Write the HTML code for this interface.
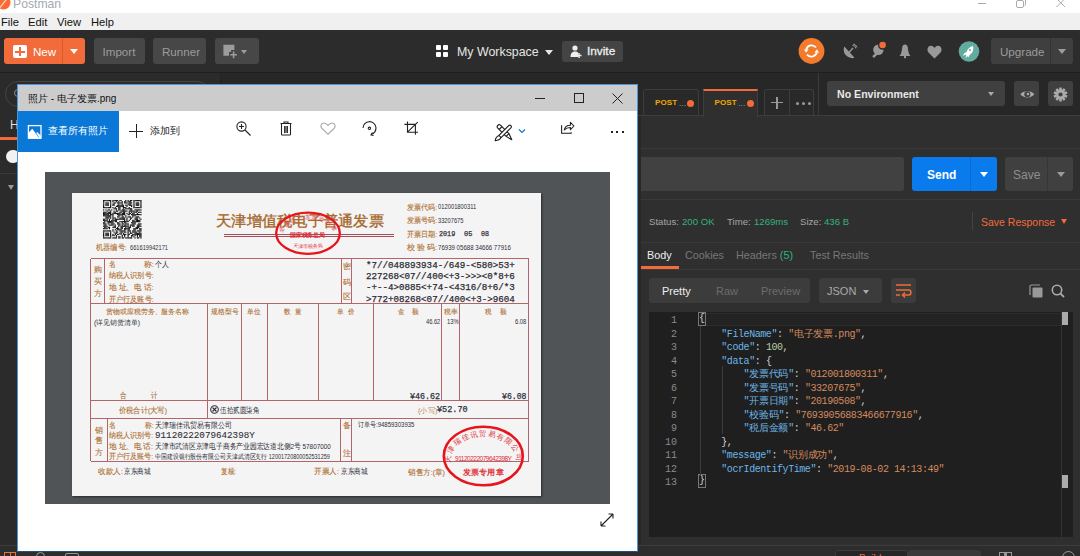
<!DOCTYPE html>
<html><head><meta charset="utf-8">
<style>
*{margin:0;padding:0;box-sizing:border-box}
html,body{width:1080px;height:556px;overflow:hidden;background:#2f2f2f;font-family:"Liberation Sans",sans-serif}
.a{position:absolute}
.t{position:absolute;white-space:nowrap;line-height:1}
/* postman */
#titlebar{left:0;top:0;width:1080px;height:13px;background:#fff}
#menubar{left:0;top:13px;width:1080px;height:17px;background:#f0f0f0}
#header{left:0;top:30px;width:1080px;height:42px;background:#2c2c2c}
.btn{position:absolute;background:#474747;border-radius:3px;color:#9c9c9c;font-size:12px;text-align:center}
.mono{font-family:"Liberation Mono",monospace}
.ln{position:absolute;left:650px;width:27px;text-align:right;height:13.5px;line-height:13.5px;font-family:"Liberation Mono",monospace;font-size:10px;color:#8a8a8a}
.cl{position:absolute;left:699px;height:13.5px;line-height:13.5px;font-family:"Liberation Mono",monospace;font-size:10px;letter-spacing:-0.43px;color:#cfcfcf;white-space:pre}
.br{outline:1px solid #777;outline-offset:0px;display:inline-block;height:12px;line-height:11px;vertical-align:top;margin-top:-1px}
</style></head><body>
<!-- window title bar -->
<div class="a" id="titlebar"></div>
<svg class="a" style="left:-4px;top:-5px" width="15" height="15"><circle cx="7.5" cy="7.5" r="7" fill="#fb6a33"/><path d="M4 12.5L11.5 3" stroke="#ffd2bd" stroke-width="1.3"/></svg>
<div class="t" style="left:13px;top:-2.5px;font-size:12.2px;color:#a3a9b0">Postman</div>
<div class="a" style="left:977.5px;top:2.6px;width:8.5px;height:1px;background:#aaa"></div>
<svg class="a" style="left:1015px;top:-3px" width="12" height="12"><rect x="1.5" y="3.5" width="7" height="7" rx="1.5" fill="none" stroke="#aaa" stroke-width="1"/><path d="M3.5 2.5Q3.5 1.5 4.5 1.5H9Q10.5 1.5 10.5 3V7.5Q10.5 8.5 9.5 8.5" fill="none" stroke="#aaa" stroke-width="1"/></svg>
<svg class="a" style="left:1056px;top:-2px" width="10" height="10"><path d="M0.5 0.5L9 9M9 0.5L0.5 9" stroke="#aaa" stroke-width="1"/></svg>
<!-- menu -->
<div class="a" id="menubar"></div>
<div class="t" style="left:1px;top:17px;font-size:11.2px;color:#111">File</div>
<div class="t" style="left:28px;top:17px;font-size:11.2px;color:#111">Edit</div>
<div class="t" style="left:57px;top:17px;font-size:11.2px;color:#111">View</div>
<div class="t" style="left:91px;top:17px;font-size:11.2px;color:#111">Help</div>
<!-- header -->
<div class="a" id="header"></div>
<div class="a" style="left:0;top:72px;width:1080px;height:1px;background:#1f1f1f"></div>
<!-- New button -->
<div class="a" style="left:4px;top:38px;width:81px;height:26px;background:#f26b3a;border-radius:3px"></div>
<div class="a" style="left:62px;top:38px;width:1px;height:26px;background:#d95a2b"></div>
<div class="a" style="left:13px;top:45px;width:14px;height:13px;background:#fff;border-radius:2px"></div>
<div class="a" style="left:19px;top:47px;width:2px;height:9px;background:#f26b3a"></div>
<div class="a" style="left:15px;top:50.5px;width:10px;height:2px;background:#f26b3a"></div>
<div class="t" style="left:33px;top:46px;font-size:11.6px;color:#fff">New</div>
<div class="a" style="left:70px;top:49px;width:0;height:0;border-left:4px solid transparent;border-right:4px solid transparent;border-top:5px solid #fff"></div>
<div class="btn" style="left:94px;top:38px;width:51px;height:26px"></div>
<div class="t" style="left:102.5px;top:46px;font-size:11.6px;color:#9c9c9c">Import</div>
<div class="btn" style="left:153px;top:38px;width:53px;height:26px"></div>
<div class="t" style="left:162px;top:46px;font-size:11.6px;color:#9c9c9c">Runner</div>
<div class="btn" style="left:215px;top:38px;width:44px;height:26px"></div>
<svg class="a" style="left:223px;top:44px" width="16" height="17" viewBox="0 0 16 17"><path d="M0.4 0.8H11.4V5.9H8.1V8H6V11.8H0.4Z" fill="#9c9c9c"/><path d="M7.3 10.8H14M10.6 7.5V14.2" stroke="#9c9c9c" stroke-width="1.6"/></svg>
<div class="a" style="left:240.5px;top:49.5px;width:0;height:0;border-left:3.3px solid transparent;border-right:3.3px solid transparent;border-top:4.3px solid #9c9c9c"></div>
<!-- workspace -->
<div class="a" style="left:436px;top:45px;width:5px;height:5px;background:#fff;border-radius:1px"></div>
<div class="a" style="left:443px;top:45px;width:5px;height:5px;background:#fff;border-radius:1px"></div>
<div class="a" style="left:436px;top:52px;width:5px;height:5px;background:#fff;border-radius:1px"></div>
<div class="a" style="left:443px;top:52px;width:5px;height:5px;background:#fff;border-radius:1px"></div>
<div class="t" style="left:457px;top:45.5px;font-size:12.4px;color:#e6e6e6">My Workspace</div>
<div class="a" style="left:545px;top:50px;width:0;height:0;border-left:4px solid transparent;border-right:4px solid transparent;border-top:5px solid #e6e6e6"></div>
<div class="btn" style="left:562px;top:41px;width:61px;height:21px;background:#444"></div>
<svg class="a" style="left:570px;top:45px" width="12" height="13" viewBox="0 0 12 13"><circle cx="5" cy="3" r="2.6" fill="#eee"/><path d="M0.5 12C0.5 8 2.5 6.5 5 6.5C6.5 6.5 7.5 7 8 7.5V12Z" fill="#eee"/><path d="M9 8V13M6.5 10.5H11.5" stroke="#eee" stroke-width="1.5"/></svg>
<div class="t" style="left:587px;top:46px;font-size:11.8px;color:#f0f0f0;-webkit-text-stroke:0.3px #f0f0f0">Invite</div>
<!-- right header icons -->
<svg class="a" style="left:798px;top:38px" width="27" height="27" viewBox="0 0 27 27"><circle cx="13.5" cy="13" r="12.9" fill="#f47a2c"/>
<g fill="none" stroke="#fff" stroke-width="1.8"><path d="M8.2 11.5A5.6 5.6 0 0 1 18 9.5"/><path d="M18.8 14.5A5.6 5.6 0 0 1 9 16.5"/></g>
<path d="M6 11.2L10.6 11.6L8 14.8Z" fill="#fff"/><path d="M21 14.8L16.4 14.4L19 11.2Z" fill="#fff"/></svg>
<svg class="a" style="left:842px;top:43px" width="16" height="16" viewBox="0 0 16 16"><path d="M2.3 3.5A8.5 8.5 0 0 0 12.5 14.8Z" fill="#999"/><path d="M7 9.5L11 5" stroke="#999" stroke-width="1.3"/><path d="M10.5 2.5A3 3 0 0 1 13.8 5.5M11 1A4.5 4.5 0 0 1 15 4.5" stroke="#999" stroke-width="1" fill="none"/></svg>
<svg class="a" style="left:871px;top:40px" width="17" height="19" viewBox="0 0 17 19"><circle cx="7.4" cy="9.8" r="5.2" fill="#999"/><path d="M5.5 12L1.2 16.3L3 18L7.3 13.7Z" fill="#999"/><circle cx="11.6" cy="5.2" r="4.6" fill="#2c2c2c"/><circle cx="7.4" cy="9.8" r="1.6" fill="#999"/><circle cx="11.6" cy="5" r="3.3" fill="#f26b3a"/></svg>
<svg class="a" style="left:899px;top:44px" width="12" height="15" viewBox="0 0 12 15"><path d="M6 0.5C4.5 0.5 3.5 1.5 3.3 3C2.8 6.5 2.6 10 0.5 12H11.5C9.4 10 9.2 6.5 8.7 3C8.5 1.5 7.5 0.5 6 0.5Z" fill="#999"/><rect x="5" y="12" width="2" height="2.2" fill="#999"/></svg>
<svg class="a" style="left:927px;top:45px" width="15" height="14" viewBox="0 0 15 14"><path d="M7.5 13.5L1.5 7.5C-0.5 5.5 0.5 0.8 4 0.8C5.8 0.8 6.8 2 7.5 3C8.2 2 9.2 0.8 11 0.8C14.5 0.8 15.5 5.5 13.5 7.5Z" fill="#999"/></svg>
<svg class="a" style="left:958px;top:41px" width="22" height="22" viewBox="0 0 22 22"><circle cx="11" cy="10.5" r="10.3" fill="#62ab9f"/><path d="M15 5C12 5.5 9.5 8 8.5 11L6 12.5L5 15L7.5 13.5L8.3 14.5L7.5 17L10 15L10.5 16.5L12 13.5C14 12.5 16 9.5 15 5Z" fill="#fff"/><circle cx="12" cy="9" r="1" fill="#62ab9f"/></svg>

<div class="btn" style="left:991px;top:38px;width:82px;height:26px;background:#3f3f3f"></div>
<div class="a" style="left:1050px;top:38px;width:1px;height:26px;background:#333"></div>
<div class="t" style="left:1000px;top:46px;font-size:11.6px;color:#9c9c9c">Upgrade</div>
<div class="a" style="left:1058px;top:49px;width:0;height:0;border-left:4px solid transparent;border-right:4px solid transparent;border-top:5px solid #9c9c9c"></div>

<!-- sidebar -->
<div class="a" style="left:0;top:73px;width:220px;height:472px;background:#2b2b2b"></div>
<div class="a" style="left:220px;top:73px;width:1px;height:472px;background:#222"></div>
<div class="a" style="left:5px;top:81px;width:205px;height:26px;border:1px solid #444;border-radius:13px"></div>

<!-- main right -->
<div class="a" style="left:221px;top:73px;width:859px;height:472px;background:#2f2f2f"></div>

<!-- sidebar bits (left of photo window) -->
<div class="t" style="left:10px;top:119px;font-size:12px;color:#ddd">H</div>
<div class="a" style="left:0;top:137px;width:30px;height:3px;background:#f26b3a"></div>
<div class="a" style="left:6px;top:150px;width:14px;height:13px;border-radius:7px;background:#f2f2f2"></div>
<div class="a" style="left:0;top:173px;width:220px;height:1px;background:#3a3a3a"></div>
<div class="a" style="left:8px;top:185px;width:0;height:0;border-left:3.5px solid transparent;border-right:3.5px solid transparent;border-top:5px solid #999"></div>
<div class="a" style="left:14px;top:88.5px;width:8.5px;height:8.5px;border-radius:50%;border:1.3px solid #8a8a8a"></div>

<!-- tabs row -->
<div class="a" style="left:221px;top:73px;width:859px;height:42px;background:#272727"></div>
<div class="a" style="left:818px;top:73px;width:1px;height:42px;background:#3a3a3a"></div>
<div class="a" style="left:221px;top:115px;width:859px;height:1px;background:#3d3d3d"></div>
<div class="a" style="left:643px;top:89px;width:56px;height:26px;border:1px solid #3d3d3d;border-bottom:none;border-radius:3px 3px 0 0;background:#292929"></div>
<div class="t" style="left:655px;top:99px;font-size:8px;font-weight:bold;color:#f0a800;letter-spacing:0.1px">POST</div>
<div class="t" style="left:679px;top:100px;font-size:8px;color:#bbb;letter-spacing:0.3px">...</div>
<div class="a" style="left:687px;top:99.5px;width:7px;height:7px;border-radius:50%;background:#f26b3a"></div>
<div class="a" style="left:703px;top:89px;width:55px;height:28px;border:1px solid #3d3d3d;border-top:2px solid #f26b3a;border-bottom:none;background:#2f2f2f"></div>
<div class="t" style="left:714.5px;top:99px;font-size:8px;font-weight:bold;color:#f0a800;letter-spacing:0.1px">POST</div>
<div class="t" style="left:738px;top:100px;font-size:8px;color:#bbb;letter-spacing:0.3px">...</div>
<div class="a" style="left:746.5px;top:99.5px;width:7px;height:7px;border-radius:50%;background:#f26b3a"></div>
<div class="a" style="left:764px;top:89px;width:50px;height:26px;border:1px solid #3d3d3d;border-bottom:none;border-radius:3px 3px 0 0;background:#292929"></div>
<div class="a" style="left:789px;top:90px;width:1px;height:25px;background:#3d3d3d"></div>
<div class="a" style="left:771px;top:102px;width:12px;height:1.3px;background:#999"></div>
<div class="a" style="left:776.4px;top:96.5px;width:1.3px;height:12px;background:#999"></div>
<div class="a" style="left:795.5px;top:101.5px;width:3.4px;height:3.4px;border-radius:50%;background:#999"></div>
<div class="a" style="left:801.5px;top:101.5px;width:3.4px;height:3.4px;border-radius:50%;background:#999"></div>
<div class="a" style="left:807.5px;top:101.5px;width:3.4px;height:3.4px;border-radius:50%;background:#999"></div>
<!-- env -->
<div class="a" style="left:827px;top:81px;width:178px;height:25px;background:#404040;border-radius:3px"></div>
<div class="t" style="left:837px;top:89px;font-size:10.6px;font-weight:bold;color:#e8e8e8">No Environment</div>
<div class="a" style="left:988px;top:92px;width:0;height:0;border-left:3.5px solid transparent;border-right:3.5px solid transparent;border-top:4px solid #aaa"></div>
<div class="a" style="left:1014px;top:81px;width:25px;height:25px;background:#404040;border-radius:3px"></div>
<div class="a" style="left:1048px;top:81px;width:25px;height:25px;background:#404040;border-radius:3px"></div>
<svg class="a" style="left:1019.5px;top:89.5px" width="15" height="9"><path d="M0.3 4.3C3 0.2 11.8 0.2 14.3 4.3C11.8 8.4 3 8.4 0.3 4.3Z" fill="#aaa"/><circle cx="7.3" cy="4.3" r="3" fill="#404040"/><circle cx="7.9" cy="4" r="1.3" fill="#aaa"/></svg><svg class="a" style="left:1053px;top:86.5px" width="15" height="15"><g fill="#aaa"><circle cx="7.5" cy="7.5" r="4.9"/><rect x="6.2" y="0.6" width="2.6" height="13.8" rx="0.3" transform="rotate(0 7.5 7.5)"/><rect x="6.2" y="0.6" width="2.6" height="13.8" rx="0.3" transform="rotate(36 7.5 7.5)"/><rect x="6.2" y="0.6" width="2.6" height="13.8" rx="0.3" transform="rotate(72 7.5 7.5)"/><rect x="6.2" y="0.6" width="2.6" height="13.8" rx="0.3" transform="rotate(108 7.5 7.5)"/><rect x="6.2" y="0.6" width="2.6" height="13.8" rx="0.3" transform="rotate(144 7.5 7.5)"/></g><circle cx="7.5" cy="7.5" r="2.1" fill="#404040"/></svg>

<!-- url row -->
<div class="a" style="left:221px;top:148px;width:859px;height:1px;background:#3a3a3a"></div>
<div class="a" style="left:221px;top:157px;width:683px;height:34px;background:#414141;border-radius:3px"></div>
<div class="a" style="left:912px;top:157px;width:85px;height:34px;background:#097bed;border-radius:3px"></div>
<div class="a" style="left:970px;top:157px;width:1px;height:34px;background:#0a6ad0"></div>
<div class="t" style="left:927px;top:168.5px;font-size:12px;font-weight:bold;color:#fff">Send</div>
<div class="a" style="left:980px;top:172px;width:0;height:0;border-left:4px solid transparent;border-right:4px solid transparent;border-top:5px solid #fff"></div>
<div class="a" style="left:1005px;top:157px;width:68px;height:34px;background:#404040;border-radius:3px"></div>
<div class="a" style="left:1047px;top:157px;width:1px;height:34px;background:#363636"></div>
<div class="t" style="left:1013px;top:168.5px;font-size:12px;color:#8f8f8f">Save</div>
<div class="a" style="left:1057px;top:172px;width:0;height:0;border-left:4px solid transparent;border-right:4px solid transparent;border-top:5px solid #9a9a9a"></div>

<!-- status row -->
<div class="a" style="left:221px;top:199px;width:859px;height:1px;background:#383838"></div>
<div class="t" style="left:649px;top:216.5px;font-size:9.6px;color:#a6a6a6">Status:</div>
<div class="t" style="left:682px;top:216.5px;font-size:9.6px;color:#32b37b">200 OK</div>
<div class="t" style="left:727px;top:216.5px;font-size:9.6px;color:#a6a6a6">Time:</div>
<div class="t" style="left:754px;top:216.5px;font-size:9.6px;color:#32b37b">1269ms</div>
<div class="t" style="left:800px;top:216.5px;font-size:9.6px;color:#a6a6a6">Size:</div>
<div class="t" style="left:824px;top:216.5px;font-size:9.6px;color:#32b37b">436 B</div>
<div class="a" style="left:972px;top:212px;width:1px;height:18px;background:#444"></div>
<div class="t" style="left:981px;top:216.5px;font-size:10.5px;color:#f26b3a">Save Response</div>
<div class="a" style="left:1061px;top:219px;width:0;height:0;border-left:3.5px solid transparent;border-right:3.5px solid transparent;border-top:5px solid #f26b3a"></div>
<div class="a" style="left:221px;top:242px;width:859px;height:1px;background:#383838"></div>
<!-- body tabs -->
<div class="t" style="left:647px;top:250px;font-size:10.8px;color:#eee">Body</div>
<div class="t" style="left:685px;top:250px;font-size:10.8px;color:#777">Cookies</div>
<div class="t" style="left:736px;top:250px;font-size:10.8px;color:#777">Headers <span style="color:#32b37b">(5)</span></div>
<div class="t" style="left:810px;top:250px;font-size:10.8px;color:#777">Test Results</div>
<div class="a" style="left:640px;top:266px;width:39px;height:3px;background:#f26b3a"></div>
<div class="a" style="left:221px;top:269px;width:859px;height:1px;background:#3a3a3a"></div>
<!-- pretty bar -->
<div class="a" style="left:649px;top:278px;width:161px;height:25px;background:#3c3c3c;border-radius:3px"></div>
<div class="t" style="left:662px;top:286px;font-size:11px;color:#eee">Pretty</div>
<div class="t" style="left:716px;top:286px;font-size:11px;color:#6c6c6c">Raw</div>
<div class="t" style="left:761px;top:286px;font-size:11px;color:#6c6c6c">Preview</div>
<div class="a" style="left:819px;top:278px;width:63px;height:25px;background:#3c3c3c;border-radius:3px"></div>
<div class="t" style="left:827px;top:286px;font-size:11px;color:#aaa">JSON</div>
<div class="a" style="left:863px;top:290px;width:0;height:0;border-left:3.5px solid transparent;border-right:3.5px solid transparent;border-top:4px solid #aaa"></div>
<div class="a" style="left:891px;top:278px;width:25px;height:25px;background:#3c3c3c;border-radius:3px"></div>
<svg class="a" style="left:895px;top:283px" width="17" height="15" viewBox="0 0 17 15"><g fill="none" stroke="#f26b3a" stroke-width="1.5"><path d="M1 2H16M1 7H14C16.5 7 16.5 12 14 12H8"/><path d="M1 12H5"/><path d="M10 9.5L7.5 12L10 14.5"/></g></svg>
<svg class="a" style="left:1029px;top:284px" width="14" height="14" viewBox="0 0 14 14"><path d="M1 11V2.5Q1 1 2.5 1H11" fill="none" stroke="#999" stroke-width="1.2"/><rect x="3.5" y="3.5" width="10" height="10" rx="1" fill="#999"/></svg>
<svg class="a" style="left:1051px;top:284px" width="14" height="14" viewBox="0 0 14 14"><circle cx="6" cy="6" r="4.7" fill="none" stroke="#aaa" stroke-width="1.6"/><path d="M9.3 9.3L13 13" stroke="#aaa" stroke-width="1.8"/></svg>

<!-- code editor -->
<div class="a" style="left:649px;top:312px;width:424px;height:225px;background:#1f1f1f"></div>
<div class="a" style="left:700px;top:313px;width:361px;height:13px;background:#232323;border-top:1px solid #2c2c2c;border-bottom:1px solid #2c2c2c"></div>
<div class="a" style="left:1061px;top:312px;width:1px;height:225px;background:#333"></div>
<div class="a" style="left:1062px;top:312px;width:6px;height:13px;background:#aaa"></div>
<div class="a" style="left:1062px;top:475px;width:6px;height:13px;background:#aaa"></div>

<div class="a" style="left:638px;top:116px;width:3px;height:429px;background:#282828"></div>
<!-- code lines -->
<div class="ln" style="top:314.0px">1</div>
<div class="cl" style="top:314.0px"><span class="br">{</span></div>
<div class="ln" style="top:327.5px">2</div>
<div class="cl" style="top:327.5px">    <span style="color:#6cb6e6">"FileName"</span>: <span style="color:#d58a5e">"<span style="letter-spacing:-0.25px">电子发票</span>.png"</span>,</div>
<div class="ln" style="top:341.0px">3</div>
<div class="cl" style="top:341.0px">    <span style="color:#6cb6e6">"code"</span>: <span style="color:#b5cea8">100</span>,</div>
<div class="ln" style="top:354.5px">4</div>
<div class="cl" style="top:354.5px">    <span style="color:#6cb6e6">"data"</span>: {</div>
<div class="ln" style="top:368.0px">5</div>
<div class="cl" style="top:368.0px">        <span style="color:#6cb6e6">"<span style="letter-spacing:-0.25px">发票代码</span>"</span>: <span style="color:#d58a5e">"012001800311"</span>,</div>
<div class="ln" style="top:381.5px">6</div>
<div class="cl" style="top:381.5px">        <span style="color:#6cb6e6">"<span style="letter-spacing:-0.25px">发票号码</span>"</span>: <span style="color:#d58a5e">"33207675"</span>,</div>
<div class="ln" style="top:395.0px">7</div>
<div class="cl" style="top:395.0px">        <span style="color:#6cb6e6">"<span style="letter-spacing:-0.25px">开票日期</span>"</span>: <span style="color:#d58a5e">"20190508"</span>,</div>
<div class="ln" style="top:408.5px">8</div>
<div class="cl" style="top:408.5px">        <span style="color:#6cb6e6">"<span style="letter-spacing:-0.25px">校验码</span>"</span>: <span style="color:#d58a5e">"76939056883466677916"</span>,</div>
<div class="ln" style="top:422.0px">9</div>
<div class="cl" style="top:422.0px">        <span style="color:#6cb6e6">"<span style="letter-spacing:-0.25px">税后金额</span>"</span>: <span style="color:#d58a5e">"46.62"</span></div>
<div class="ln" style="top:435.5px">10</div>
<div class="cl" style="top:435.5px">    },</div>
<div class="ln" style="top:449.0px">11</div>
<div class="cl" style="top:449.0px">    <span style="color:#6cb6e6">"message"</span>: <span style="color:#d58a5e">"<span style="letter-spacing:-0.25px">识别成功</span>"</span>,</div>
<div class="ln" style="top:462.5px">12</div>
<div class="cl" style="top:462.5px">    <span style="color:#6cb6e6">"ocrIdentifyTime"</span>: <span style="color:#d58a5e">"2019-08-02 14:13:49"</span></div>
<div class="ln" style="top:476.0px">13</div>
<div class="cl" style="top:476.0px"><span class="br">}</span></div>
<div class="a" style="left:700px;top:326px;width:1px;height:150px;background:#3c3c3c"></div>
<div class="a" style="left:722px;top:366px;width:1px;height:68px;background:#3c3c3c"></div>
<!-- status bar -->
<div class="a" style="left:0;top:545px;width:1080px;height:11px;background:#2d2d2d;border-top:1px solid #3c3c3c"></div>
<div class="a" style="left:835px;top:550px;width:73px;height:8px;background:#262626;border:1px solid #3c3c3c;border-radius:3px 3px 0 0"></div>
<div class="a" style="left:908px;top:550px;width:73px;height:8px;background:#3a3a3a;border-radius:3px 3px 0 0"></div>
<div class="t" style="left:859px;top:553.5px;font-size:10px;color:#f26b3a">Build</div>
<div class="a" style="left:999px;top:552px;width:13px;height:6px;border:1px solid #999;border-bottom:none"></div>
<div class="a" style="left:1004px;top:553px;width:3px;height:3px;background:#999"></div>
<div class="a" style="left:1062px;top:551px;width:13px;height:13px;border:1.2px solid #999;border-radius:50%"></div>
<div class="a" style="left:4px;top:552px;width:12px;height:6px;border:1px solid #f26b3a;border-bottom:none"></div>
<div class="a" style="left:9.5px;top:553px;width:1px;height:4px;background:#f26b3a"></div>
<div class="a" style="left:36px;top:552px;width:9px;height:9px;border:1px solid #999;border-radius:50%"></div>
<div class="a" style="left:65px;top:553px;width:14px;height:6px;border:1px solid #999;border-radius:2px"></div>
<!-- PHOTOS -->
<div class="a" style="left:17px;top:84px;width:621px;height:468px;background:#fff;border:1px solid #4a96dc;border-bottom-color:#1d4f80"></div>
<div class="a" style="left:18px;top:85px;width:619px;height:26px;background:#cccccc"></div>
<div class="t" style="left:28px;top:93.5px;font-size:10px;color:#111">照片 - 电子发票.png</div>
<div class="a" style="left:535px;top:98px;width:10px;height:1px;background:#222"></div>
<div class="a" style="left:574px;top:93px;width:10px;height:10px;border:1px solid #222"></div>
<svg class="a" style="left:612px;top:93px" width="11" height="11"><path d="M0.5 0.5L10.5 10.5M10.5 0.5L0.5 10.5" stroke="#222" stroke-width="1"/></svg>
<div class="a" style="left:18px;top:111px;width:101px;height:41px;background:#0a78d7"></div>
<svg class="a" style="left:27px;top:124px" width="16" height="16"><rect x="1.4" y="1.6" width="12.6" height="12.6" fill="none" stroke="#fff" stroke-width="1.3"/><path d="M1.5 9L5.2 4.8L9 9.5L10.3 8L14 12V14.5H1.5Z" fill="#fff"/><path d="M8.6 8.8L11.8 13.2" stroke="#0a78d7" stroke-width="0.7"/></svg>
<div class="t" style="left:48px;top:126px;font-size:10.2px;color:#fff">查看所有照片</div>
<div class="a" style="left:129px;top:130.5px;width:14px;height:1px;background:#222"></div>
<div class="a" style="left:135.5px;top:124px;width:1px;height:14px;background:#222"></div>
<div class="t" style="left:150px;top:126px;font-size:10.2px;color:#222">添加到</div>
<svg class="a" style="left:236px;top:121px" width="16" height="15" fill="none" stroke="#222" stroke-width="1.1"><circle cx="5.5" cy="5.5" r="4.6"/><path d="M9 9L14.5 14.5M3 5.5H8M5.5 3V8"/></svg>
<svg class="a" style="left:279.5px;top:121px" width="13" height="15" fill="none" stroke="#222" stroke-width="1.05"><path d="M0.5 2.5H11.5M4 2.5V1H8V2.5M1.5 2.5V13.3Q1.5 14 2.2 14H9.8Q10.5 14 10.5 13.3V2.5M4.6 5V12M6 5V12M7.4 5V12"/></svg>
<svg class="a" style="left:320px;top:122px" width="16" height="13" fill="none" stroke="#aaa" stroke-width="1.1"><path d="M8 12.2L2 6.5C0 4.5 1 1 4 1C6 1 7 2.5 8 3.5C9 2.5 10 1 12 1C15 1 16 4.5 14 6.5Z"/></svg>
<svg class="a" style="left:361px;top:120px" width="17" height="17" fill="none" stroke="#222" stroke-width="1.1"><path d="M2 8A6.5 6.5 0 1 1 10 14.5"/><path d="M11.5 12.5L10 14.8L12.6 15.5"/><circle cx="8.4" cy="8.3" r="1.2"/></svg>
<svg class="a" style="left:404px;top:121px" width="16" height="16" fill="none" stroke="#222" stroke-width="1.1"><path d="M3.5 0.5V11.2H14M0.4 3.4H11.4V13.8M3.5 11.2L13.7 1.2"/></svg>
<svg class="a" style="left:494px;top:123px" width="20" height="19" stroke="#1a1a1a" stroke-width="1.1" stroke-linejoin="round"><path d="M6.4 2.1L14.9 10.6L17.8 16.8L12.1 13.4L3.6 4.9A2 2 0 0 1 6.4 2.1Z" fill="#fff"/><path d="M5.2 6.5L8 3.7M14.9 10.6L12.1 13.4" fill="none"/><path d="M14.9 2.4A1.6 1.6 0 0 1 17.1 4.6L7.1 14.6Q5.5 17.5 1.2 17.7Q1.6 13.8 4.9 12.4Z" fill="#fff"/><path d="M4.9 12.4L7.1 14.6" fill="none"/></svg>
<svg class="a" style="left:518px;top:128px" width="8" height="6" fill="none" stroke="#0a78d7" stroke-width="1.2"><path d="M1 1.5L4 4.5L7 1.5"/></svg>
<svg class="a" style="left:560px;top:121px" width="16" height="15" fill="none" stroke="#1a1a1a" stroke-width="1.05" stroke-linejoin="round"><path d="M1.6 4.2V12.2H11.2V11.2"/><path d="M4.3 9C4.8 5.8 7.3 4.2 10.4 4.2V1.3L14 5L10.4 8.6V6.4C8 6.4 5.8 7.2 4.3 9Z"/></svg>
<div class="a" style="left:610.8px;top:131.2px;width:2px;height:2px;background:#222"></div>
<div class="a" style="left:616.3px;top:131.2px;width:2px;height:2px;background:#222"></div>
<div class="a" style="left:621.8px;top:131.2px;width:2px;height:2px;background:#222"></div>
<svg class="a" style="left:600px;top:513px" width="14" height="14" fill="none" stroke="#222" stroke-width="1.1"><path d="M1 13L13 1M1 13V8.5M1 13H5.5M13 1H8.5M13 1V5.5"/></svg>
<div class="a" style="left:45px;top:172px;width:565px;height:332px;background:#505457"></div>
<div class="a" style="left:72px;top:193px;width:469px;height:303px;background:#f4f4f4;box-shadow:1px 1px 2px rgba(0,0,0,.5)"></div>
<svg class="a" style="left:103px;top:200px" width="38.5" height="38.5" viewBox="0 0 33 33"><g fill="#151515"><rect x="0" y="0" width="1.05" height="1.05"/><rect x="1" y="0" width="1.05" height="1.05"/><rect x="2" y="0" width="1.05" height="1.05"/><rect x="3" y="0" width="1.05" height="1.05"/><rect x="4" y="0" width="1.05" height="1.05"/><rect x="5" y="0" width="1.05" height="1.05"/><rect x="6" y="0" width="1.05" height="1.05"/><rect x="8" y="0" width="1.05" height="1.05"/><rect x="9" y="0" width="1.05" height="1.05"/><rect x="10" y="0" width="1.05" height="1.05"/><rect x="11" y="0" width="1.05" height="1.05"/><rect x="12" y="0" width="1.05" height="1.05"/><rect x="14" y="0" width="1.05" height="1.05"/><rect x="15" y="0" width="1.05" height="1.05"/><rect x="19" y="0" width="1.05" height="1.05"/><rect x="21" y="0" width="1.05" height="1.05"/><rect x="23" y="0" width="1.05" height="1.05"/><rect x="24" y="0" width="1.05" height="1.05"/><rect x="26" y="0" width="1.05" height="1.05"/><rect x="27" y="0" width="1.05" height="1.05"/><rect x="28" y="0" width="1.05" height="1.05"/><rect x="29" y="0" width="1.05" height="1.05"/><rect x="30" y="0" width="1.05" height="1.05"/><rect x="31" y="0" width="1.05" height="1.05"/><rect x="32" y="0" width="1.05" height="1.05"/><rect x="0" y="1" width="1.05" height="1.05"/><rect x="6" y="1" width="1.05" height="1.05"/><rect x="8" y="1" width="1.05" height="1.05"/><rect x="11" y="1" width="1.05" height="1.05"/><rect x="13" y="1" width="1.05" height="1.05"/><rect x="16" y="1" width="1.05" height="1.05"/><rect x="18" y="1" width="1.05" height="1.05"/><rect x="19" y="1" width="1.05" height="1.05"/><rect x="21" y="1" width="1.05" height="1.05"/><rect x="22" y="1" width="1.05" height="1.05"/><rect x="23" y="1" width="1.05" height="1.05"/><rect x="26" y="1" width="1.05" height="1.05"/><rect x="32" y="1" width="1.05" height="1.05"/><rect x="0" y="2" width="1.05" height="1.05"/><rect x="2" y="2" width="1.05" height="1.05"/><rect x="3" y="2" width="1.05" height="1.05"/><rect x="4" y="2" width="1.05" height="1.05"/><rect x="6" y="2" width="1.05" height="1.05"/><rect x="9" y="2" width="1.05" height="1.05"/><rect x="10" y="2" width="1.05" height="1.05"/><rect x="12" y="2" width="1.05" height="1.05"/><rect x="13" y="2" width="1.05" height="1.05"/><rect x="14" y="2" width="1.05" height="1.05"/><rect x="15" y="2" width="1.05" height="1.05"/><rect x="16" y="2" width="1.05" height="1.05"/><rect x="18" y="2" width="1.05" height="1.05"/><rect x="19" y="2" width="1.05" height="1.05"/><rect x="20" y="2" width="1.05" height="1.05"/><rect x="22" y="2" width="1.05" height="1.05"/><rect x="23" y="2" width="1.05" height="1.05"/><rect x="24" y="2" width="1.05" height="1.05"/><rect x="26" y="2" width="1.05" height="1.05"/><rect x="28" y="2" width="1.05" height="1.05"/><rect x="29" y="2" width="1.05" height="1.05"/><rect x="30" y="2" width="1.05" height="1.05"/><rect x="32" y="2" width="1.05" height="1.05"/><rect x="0" y="3" width="1.05" height="1.05"/><rect x="2" y="3" width="1.05" height="1.05"/><rect x="3" y="3" width="1.05" height="1.05"/><rect x="4" y="3" width="1.05" height="1.05"/><rect x="6" y="3" width="1.05" height="1.05"/><rect x="8" y="3" width="1.05" height="1.05"/><rect x="9" y="3" width="1.05" height="1.05"/><rect x="13" y="3" width="1.05" height="1.05"/><rect x="16" y="3" width="1.05" height="1.05"/><rect x="21" y="3" width="1.05" height="1.05"/><rect x="22" y="3" width="1.05" height="1.05"/><rect x="23" y="3" width="1.05" height="1.05"/><rect x="26" y="3" width="1.05" height="1.05"/><rect x="28" y="3" width="1.05" height="1.05"/><rect x="29" y="3" width="1.05" height="1.05"/><rect x="30" y="3" width="1.05" height="1.05"/><rect x="32" y="3" width="1.05" height="1.05"/><rect x="0" y="4" width="1.05" height="1.05"/><rect x="2" y="4" width="1.05" height="1.05"/><rect x="3" y="4" width="1.05" height="1.05"/><rect x="4" y="4" width="1.05" height="1.05"/><rect x="6" y="4" width="1.05" height="1.05"/><rect x="8" y="4" width="1.05" height="1.05"/><rect x="9" y="4" width="1.05" height="1.05"/><rect x="12" y="4" width="1.05" height="1.05"/><rect x="13" y="4" width="1.05" height="1.05"/><rect x="14" y="4" width="1.05" height="1.05"/><rect x="15" y="4" width="1.05" height="1.05"/><rect x="16" y="4" width="1.05" height="1.05"/><rect x="17" y="4" width="1.05" height="1.05"/><rect x="19" y="4" width="1.05" height="1.05"/><rect x="20" y="4" width="1.05" height="1.05"/><rect x="22" y="4" width="1.05" height="1.05"/><rect x="23" y="4" width="1.05" height="1.05"/><rect x="24" y="4" width="1.05" height="1.05"/><rect x="26" y="4" width="1.05" height="1.05"/><rect x="28" y="4" width="1.05" height="1.05"/><rect x="29" y="4" width="1.05" height="1.05"/><rect x="30" y="4" width="1.05" height="1.05"/><rect x="32" y="4" width="1.05" height="1.05"/><rect x="0" y="5" width="1.05" height="1.05"/><rect x="6" y="5" width="1.05" height="1.05"/><rect x="11" y="5" width="1.05" height="1.05"/><rect x="12" y="5" width="1.05" height="1.05"/><rect x="13" y="5" width="1.05" height="1.05"/><rect x="14" y="5" width="1.05" height="1.05"/><rect x="15" y="5" width="1.05" height="1.05"/><rect x="16" y="5" width="1.05" height="1.05"/><rect x="17" y="5" width="1.05" height="1.05"/><rect x="20" y="5" width="1.05" height="1.05"/><rect x="24" y="5" width="1.05" height="1.05"/><rect x="26" y="5" width="1.05" height="1.05"/><rect x="32" y="5" width="1.05" height="1.05"/><rect x="0" y="6" width="1.05" height="1.05"/><rect x="1" y="6" width="1.05" height="1.05"/><rect x="2" y="6" width="1.05" height="1.05"/><rect x="3" y="6" width="1.05" height="1.05"/><rect x="4" y="6" width="1.05" height="1.05"/><rect x="5" y="6" width="1.05" height="1.05"/><rect x="6" y="6" width="1.05" height="1.05"/><rect x="8" y="6" width="1.05" height="1.05"/><rect x="10" y="6" width="1.05" height="1.05"/><rect x="13" y="6" width="1.05" height="1.05"/><rect x="14" y="6" width="1.05" height="1.05"/><rect x="17" y="6" width="1.05" height="1.05"/><rect x="18" y="6" width="1.05" height="1.05"/><rect x="19" y="6" width="1.05" height="1.05"/><rect x="22" y="6" width="1.05" height="1.05"/><rect x="26" y="6" width="1.05" height="1.05"/><rect x="27" y="6" width="1.05" height="1.05"/><rect x="28" y="6" width="1.05" height="1.05"/><rect x="29" y="6" width="1.05" height="1.05"/><rect x="30" y="6" width="1.05" height="1.05"/><rect x="31" y="6" width="1.05" height="1.05"/><rect x="32" y="6" width="1.05" height="1.05"/><rect x="9" y="7" width="1.05" height="1.05"/><rect x="10" y="7" width="1.05" height="1.05"/><rect x="11" y="7" width="1.05" height="1.05"/><rect x="13" y="7" width="1.05" height="1.05"/><rect x="14" y="7" width="1.05" height="1.05"/><rect x="17" y="7" width="1.05" height="1.05"/><rect x="19" y="7" width="1.05" height="1.05"/><rect x="20" y="7" width="1.05" height="1.05"/><rect x="21" y="7" width="1.05" height="1.05"/><rect x="22" y="7" width="1.05" height="1.05"/><rect x="23" y="7" width="1.05" height="1.05"/><rect x="24" y="7" width="1.05" height="1.05"/><rect x="0" y="8" width="1.05" height="1.05"/><rect x="2" y="8" width="1.05" height="1.05"/><rect x="4" y="8" width="1.05" height="1.05"/><rect x="5" y="8" width="1.05" height="1.05"/><rect x="7" y="8" width="1.05" height="1.05"/><rect x="11" y="8" width="1.05" height="1.05"/><rect x="13" y="8" width="1.05" height="1.05"/><rect x="14" y="8" width="1.05" height="1.05"/><rect x="16" y="8" width="1.05" height="1.05"/><rect x="17" y="8" width="1.05" height="1.05"/><rect x="18" y="8" width="1.05" height="1.05"/><rect x="23" y="8" width="1.05" height="1.05"/><rect x="24" y="8" width="1.05" height="1.05"/><rect x="27" y="8" width="1.05" height="1.05"/><rect x="28" y="8" width="1.05" height="1.05"/><rect x="29" y="8" width="1.05" height="1.05"/><rect x="30" y="8" width="1.05" height="1.05"/><rect x="31" y="8" width="1.05" height="1.05"/><rect x="32" y="8" width="1.05" height="1.05"/><rect x="3" y="9" width="1.05" height="1.05"/><rect x="6" y="9" width="1.05" height="1.05"/><rect x="9" y="9" width="1.05" height="1.05"/><rect x="11" y="9" width="1.05" height="1.05"/><rect x="12" y="9" width="1.05" height="1.05"/><rect x="15" y="9" width="1.05" height="1.05"/><rect x="16" y="9" width="1.05" height="1.05"/><rect x="17" y="9" width="1.05" height="1.05"/><rect x="18" y="9" width="1.05" height="1.05"/><rect x="19" y="9" width="1.05" height="1.05"/><rect x="20" y="9" width="1.05" height="1.05"/><rect x="22" y="9" width="1.05" height="1.05"/><rect x="23" y="9" width="1.05" height="1.05"/><rect x="24" y="9" width="1.05" height="1.05"/><rect x="25" y="9" width="1.05" height="1.05"/><rect x="26" y="9" width="1.05" height="1.05"/><rect x="28" y="9" width="1.05" height="1.05"/><rect x="29" y="9" width="1.05" height="1.05"/><rect x="0" y="10" width="1.05" height="1.05"/><rect x="1" y="10" width="1.05" height="1.05"/><rect x="2" y="10" width="1.05" height="1.05"/><rect x="4" y="10" width="1.05" height="1.05"/><rect x="5" y="10" width="1.05" height="1.05"/><rect x="6" y="10" width="1.05" height="1.05"/><rect x="9" y="10" width="1.05" height="1.05"/><rect x="10" y="10" width="1.05" height="1.05"/><rect x="14" y="10" width="1.05" height="1.05"/><rect x="15" y="10" width="1.05" height="1.05"/><rect x="17" y="10" width="1.05" height="1.05"/><rect x="18" y="10" width="1.05" height="1.05"/><rect x="22" y="10" width="1.05" height="1.05"/><rect x="24" y="10" width="1.05" height="1.05"/><rect x="26" y="10" width="1.05" height="1.05"/><rect x="27" y="10" width="1.05" height="1.05"/><rect x="28" y="10" width="1.05" height="1.05"/><rect x="30" y="10" width="1.05" height="1.05"/><rect x="31" y="10" width="1.05" height="1.05"/><rect x="32" y="10" width="1.05" height="1.05"/><rect x="0" y="11" width="1.05" height="1.05"/><rect x="1" y="11" width="1.05" height="1.05"/><rect x="2" y="11" width="1.05" height="1.05"/><rect x="3" y="11" width="1.05" height="1.05"/><rect x="4" y="11" width="1.05" height="1.05"/><rect x="5" y="11" width="1.05" height="1.05"/><rect x="6" y="11" width="1.05" height="1.05"/><rect x="8" y="11" width="1.05" height="1.05"/><rect x="9" y="11" width="1.05" height="1.05"/><rect x="10" y="11" width="1.05" height="1.05"/><rect x="11" y="11" width="1.05" height="1.05"/><rect x="12" y="11" width="1.05" height="1.05"/><rect x="13" y="11" width="1.05" height="1.05"/><rect x="14" y="11" width="1.05" height="1.05"/><rect x="16" y="11" width="1.05" height="1.05"/><rect x="17" y="11" width="1.05" height="1.05"/><rect x="18" y="11" width="1.05" height="1.05"/><rect x="20" y="11" width="1.05" height="1.05"/><rect x="22" y="11" width="1.05" height="1.05"/><rect x="23" y="11" width="1.05" height="1.05"/><rect x="25" y="11" width="1.05" height="1.05"/><rect x="26" y="11" width="1.05" height="1.05"/><rect x="29" y="11" width="1.05" height="1.05"/><rect x="0" y="12" width="1.05" height="1.05"/><rect x="1" y="12" width="1.05" height="1.05"/><rect x="2" y="12" width="1.05" height="1.05"/><rect x="3" y="12" width="1.05" height="1.05"/><rect x="4" y="12" width="1.05" height="1.05"/><rect x="6" y="12" width="1.05" height="1.05"/><rect x="7" y="12" width="1.05" height="1.05"/><rect x="8" y="12" width="1.05" height="1.05"/><rect x="12" y="12" width="1.05" height="1.05"/><rect x="13" y="12" width="1.05" height="1.05"/><rect x="14" y="12" width="1.05" height="1.05"/><rect x="15" y="12" width="1.05" height="1.05"/><rect x="16" y="12" width="1.05" height="1.05"/><rect x="17" y="12" width="1.05" height="1.05"/><rect x="18" y="12" width="1.05" height="1.05"/><rect x="21" y="12" width="1.05" height="1.05"/><rect x="22" y="12" width="1.05" height="1.05"/><rect x="24" y="12" width="1.05" height="1.05"/><rect x="25" y="12" width="1.05" height="1.05"/><rect x="26" y="12" width="1.05" height="1.05"/><rect x="27" y="12" width="1.05" height="1.05"/><rect x="28" y="12" width="1.05" height="1.05"/><rect x="29" y="12" width="1.05" height="1.05"/><rect x="30" y="12" width="1.05" height="1.05"/><rect x="31" y="12" width="1.05" height="1.05"/><rect x="32" y="12" width="1.05" height="1.05"/><rect x="0" y="13" width="1.05" height="1.05"/><rect x="1" y="13" width="1.05" height="1.05"/><rect x="2" y="13" width="1.05" height="1.05"/><rect x="3" y="13" width="1.05" height="1.05"/><rect x="4" y="13" width="1.05" height="1.05"/><rect x="5" y="13" width="1.05" height="1.05"/><rect x="6" y="13" width="1.05" height="1.05"/><rect x="8" y="13" width="1.05" height="1.05"/><rect x="13" y="13" width="1.05" height="1.05"/><rect x="14" y="13" width="1.05" height="1.05"/><rect x="16" y="13" width="1.05" height="1.05"/><rect x="19" y="13" width="1.05" height="1.05"/><rect x="25" y="13" width="1.05" height="1.05"/><rect x="26" y="13" width="1.05" height="1.05"/><rect x="27" y="13" width="1.05" height="1.05"/><rect x="2" y="14" width="1.05" height="1.05"/><rect x="3" y="14" width="1.05" height="1.05"/><rect x="4" y="14" width="1.05" height="1.05"/><rect x="5" y="14" width="1.05" height="1.05"/><rect x="6" y="14" width="1.05" height="1.05"/><rect x="8" y="14" width="1.05" height="1.05"/><rect x="12" y="14" width="1.05" height="1.05"/><rect x="13" y="14" width="1.05" height="1.05"/><rect x="16" y="14" width="1.05" height="1.05"/><rect x="17" y="14" width="1.05" height="1.05"/><rect x="19" y="14" width="1.05" height="1.05"/><rect x="21" y="14" width="1.05" height="1.05"/><rect x="22" y="14" width="1.05" height="1.05"/><rect x="23" y="14" width="1.05" height="1.05"/><rect x="25" y="14" width="1.05" height="1.05"/><rect x="28" y="14" width="1.05" height="1.05"/><rect x="29" y="14" width="1.05" height="1.05"/><rect x="30" y="14" width="1.05" height="1.05"/><rect x="2" y="15" width="1.05" height="1.05"/><rect x="3" y="15" width="1.05" height="1.05"/><rect x="4" y="15" width="1.05" height="1.05"/><rect x="6" y="15" width="1.05" height="1.05"/><rect x="8" y="15" width="1.05" height="1.05"/><rect x="9" y="15" width="1.05" height="1.05"/><rect x="10" y="15" width="1.05" height="1.05"/><rect x="14" y="15" width="1.05" height="1.05"/><rect x="15" y="15" width="1.05" height="1.05"/><rect x="16" y="15" width="1.05" height="1.05"/><rect x="17" y="15" width="1.05" height="1.05"/><rect x="18" y="15" width="1.05" height="1.05"/><rect x="20" y="15" width="1.05" height="1.05"/><rect x="23" y="15" width="1.05" height="1.05"/><rect x="24" y="15" width="1.05" height="1.05"/><rect x="27" y="15" width="1.05" height="1.05"/><rect x="28" y="15" width="1.05" height="1.05"/><rect x="29" y="15" width="1.05" height="1.05"/><rect x="31" y="15" width="1.05" height="1.05"/><rect x="0" y="16" width="1.05" height="1.05"/><rect x="1" y="16" width="1.05" height="1.05"/><rect x="3" y="16" width="1.05" height="1.05"/><rect x="5" y="16" width="1.05" height="1.05"/><rect x="8" y="16" width="1.05" height="1.05"/><rect x="10" y="16" width="1.05" height="1.05"/><rect x="11" y="16" width="1.05" height="1.05"/><rect x="12" y="16" width="1.05" height="1.05"/><rect x="13" y="16" width="1.05" height="1.05"/><rect x="14" y="16" width="1.05" height="1.05"/><rect x="15" y="16" width="1.05" height="1.05"/><rect x="16" y="16" width="1.05" height="1.05"/><rect x="17" y="16" width="1.05" height="1.05"/><rect x="18" y="16" width="1.05" height="1.05"/><rect x="20" y="16" width="1.05" height="1.05"/><rect x="23" y="16" width="1.05" height="1.05"/><rect x="27" y="16" width="1.05" height="1.05"/><rect x="28" y="16" width="1.05" height="1.05"/><rect x="29" y="16" width="1.05" height="1.05"/><rect x="32" y="16" width="1.05" height="1.05"/><rect x="0" y="17" width="1.05" height="1.05"/><rect x="1" y="17" width="1.05" height="1.05"/><rect x="2" y="17" width="1.05" height="1.05"/><rect x="3" y="17" width="1.05" height="1.05"/><rect x="5" y="17" width="1.05" height="1.05"/><rect x="7" y="17" width="1.05" height="1.05"/><rect x="8" y="17" width="1.05" height="1.05"/><rect x="9" y="17" width="1.05" height="1.05"/><rect x="10" y="17" width="1.05" height="1.05"/><rect x="11" y="17" width="1.05" height="1.05"/><rect x="18" y="17" width="1.05" height="1.05"/><rect x="20" y="17" width="1.05" height="1.05"/><rect x="22" y="17" width="1.05" height="1.05"/><rect x="25" y="17" width="1.05" height="1.05"/><rect x="26" y="17" width="1.05" height="1.05"/><rect x="28" y="17" width="1.05" height="1.05"/><rect x="29" y="17" width="1.05" height="1.05"/><rect x="30" y="17" width="1.05" height="1.05"/><rect x="31" y="17" width="1.05" height="1.05"/><rect x="1" y="18" width="1.05" height="1.05"/><rect x="3" y="18" width="1.05" height="1.05"/><rect x="4" y="18" width="1.05" height="1.05"/><rect x="5" y="18" width="1.05" height="1.05"/><rect x="6" y="18" width="1.05" height="1.05"/><rect x="7" y="18" width="1.05" height="1.05"/><rect x="8" y="18" width="1.05" height="1.05"/><rect x="10" y="18" width="1.05" height="1.05"/><rect x="11" y="18" width="1.05" height="1.05"/><rect x="14" y="18" width="1.05" height="1.05"/><rect x="15" y="18" width="1.05" height="1.05"/><rect x="16" y="18" width="1.05" height="1.05"/><rect x="17" y="18" width="1.05" height="1.05"/><rect x="18" y="18" width="1.05" height="1.05"/><rect x="19" y="18" width="1.05" height="1.05"/><rect x="20" y="18" width="1.05" height="1.05"/><rect x="21" y="18" width="1.05" height="1.05"/><rect x="25" y="18" width="1.05" height="1.05"/><rect x="26" y="18" width="1.05" height="1.05"/><rect x="27" y="18" width="1.05" height="1.05"/><rect x="28" y="18" width="1.05" height="1.05"/><rect x="29" y="18" width="1.05" height="1.05"/><rect x="30" y="18" width="1.05" height="1.05"/><rect x="31" y="18" width="1.05" height="1.05"/><rect x="0" y="19" width="1.05" height="1.05"/><rect x="1" y="19" width="1.05" height="1.05"/><rect x="4" y="19" width="1.05" height="1.05"/><rect x="5" y="19" width="1.05" height="1.05"/><rect x="6" y="19" width="1.05" height="1.05"/><rect x="7" y="19" width="1.05" height="1.05"/><rect x="8" y="19" width="1.05" height="1.05"/><rect x="12" y="19" width="1.05" height="1.05"/><rect x="13" y="19" width="1.05" height="1.05"/><rect x="16" y="19" width="1.05" height="1.05"/><rect x="18" y="19" width="1.05" height="1.05"/><rect x="19" y="19" width="1.05" height="1.05"/><rect x="24" y="19" width="1.05" height="1.05"/><rect x="25" y="19" width="1.05" height="1.05"/><rect x="26" y="19" width="1.05" height="1.05"/><rect x="27" y="19" width="1.05" height="1.05"/><rect x="0" y="20" width="1.05" height="1.05"/><rect x="1" y="20" width="1.05" height="1.05"/><rect x="2" y="20" width="1.05" height="1.05"/><rect x="4" y="20" width="1.05" height="1.05"/><rect x="7" y="20" width="1.05" height="1.05"/><rect x="8" y="20" width="1.05" height="1.05"/><rect x="9" y="20" width="1.05" height="1.05"/><rect x="12" y="20" width="1.05" height="1.05"/><rect x="13" y="20" width="1.05" height="1.05"/><rect x="14" y="20" width="1.05" height="1.05"/><rect x="16" y="20" width="1.05" height="1.05"/><rect x="17" y="20" width="1.05" height="1.05"/><rect x="19" y="20" width="1.05" height="1.05"/><rect x="20" y="20" width="1.05" height="1.05"/><rect x="21" y="20" width="1.05" height="1.05"/><rect x="25" y="20" width="1.05" height="1.05"/><rect x="26" y="20" width="1.05" height="1.05"/><rect x="27" y="20" width="1.05" height="1.05"/><rect x="30" y="20" width="1.05" height="1.05"/><rect x="31" y="20" width="1.05" height="1.05"/><rect x="32" y="20" width="1.05" height="1.05"/><rect x="1" y="21" width="1.05" height="1.05"/><rect x="2" y="21" width="1.05" height="1.05"/><rect x="5" y="21" width="1.05" height="1.05"/><rect x="6" y="21" width="1.05" height="1.05"/><rect x="7" y="21" width="1.05" height="1.05"/><rect x="8" y="21" width="1.05" height="1.05"/><rect x="10" y="21" width="1.05" height="1.05"/><rect x="13" y="21" width="1.05" height="1.05"/><rect x="14" y="21" width="1.05" height="1.05"/><rect x="16" y="21" width="1.05" height="1.05"/><rect x="18" y="21" width="1.05" height="1.05"/><rect x="19" y="21" width="1.05" height="1.05"/><rect x="21" y="21" width="1.05" height="1.05"/><rect x="23" y="21" width="1.05" height="1.05"/><rect x="24" y="21" width="1.05" height="1.05"/><rect x="25" y="21" width="1.05" height="1.05"/><rect x="26" y="21" width="1.05" height="1.05"/><rect x="29" y="21" width="1.05" height="1.05"/><rect x="30" y="21" width="1.05" height="1.05"/><rect x="31" y="21" width="1.05" height="1.05"/><rect x="0" y="22" width="1.05" height="1.05"/><rect x="1" y="22" width="1.05" height="1.05"/><rect x="2" y="22" width="1.05" height="1.05"/><rect x="3" y="22" width="1.05" height="1.05"/><rect x="9" y="22" width="1.05" height="1.05"/><rect x="10" y="22" width="1.05" height="1.05"/><rect x="13" y="22" width="1.05" height="1.05"/><rect x="15" y="22" width="1.05" height="1.05"/><rect x="16" y="22" width="1.05" height="1.05"/><rect x="17" y="22" width="1.05" height="1.05"/><rect x="18" y="22" width="1.05" height="1.05"/><rect x="19" y="22" width="1.05" height="1.05"/><rect x="20" y="22" width="1.05" height="1.05"/><rect x="21" y="22" width="1.05" height="1.05"/><rect x="23" y="22" width="1.05" height="1.05"/><rect x="25" y="22" width="1.05" height="1.05"/><rect x="26" y="22" width="1.05" height="1.05"/><rect x="29" y="22" width="1.05" height="1.05"/><rect x="30" y="22" width="1.05" height="1.05"/><rect x="31" y="22" width="1.05" height="1.05"/><rect x="32" y="22" width="1.05" height="1.05"/><rect x="1" y="23" width="1.05" height="1.05"/><rect x="2" y="23" width="1.05" height="1.05"/><rect x="4" y="23" width="1.05" height="1.05"/><rect x="5" y="23" width="1.05" height="1.05"/><rect x="8" y="23" width="1.05" height="1.05"/><rect x="9" y="23" width="1.05" height="1.05"/><rect x="10" y="23" width="1.05" height="1.05"/><rect x="12" y="23" width="1.05" height="1.05"/><rect x="15" y="23" width="1.05" height="1.05"/><rect x="16" y="23" width="1.05" height="1.05"/><rect x="19" y="23" width="1.05" height="1.05"/><rect x="21" y="23" width="1.05" height="1.05"/><rect x="22" y="23" width="1.05" height="1.05"/><rect x="23" y="23" width="1.05" height="1.05"/><rect x="28" y="23" width="1.05" height="1.05"/><rect x="29" y="23" width="1.05" height="1.05"/><rect x="30" y="23" width="1.05" height="1.05"/><rect x="0" y="24" width="1.05" height="1.05"/><rect x="1" y="24" width="1.05" height="1.05"/><rect x="2" y="24" width="1.05" height="1.05"/><rect x="3" y="24" width="1.05" height="1.05"/><rect x="5" y="24" width="1.05" height="1.05"/><rect x="11" y="24" width="1.05" height="1.05"/><rect x="12" y="24" width="1.05" height="1.05"/><rect x="13" y="24" width="1.05" height="1.05"/><rect x="15" y="24" width="1.05" height="1.05"/><rect x="16" y="24" width="1.05" height="1.05"/><rect x="18" y="24" width="1.05" height="1.05"/><rect x="19" y="24" width="1.05" height="1.05"/><rect x="20" y="24" width="1.05" height="1.05"/><rect x="21" y="24" width="1.05" height="1.05"/><rect x="22" y="24" width="1.05" height="1.05"/><rect x="26" y="24" width="1.05" height="1.05"/><rect x="27" y="24" width="1.05" height="1.05"/><rect x="28" y="24" width="1.05" height="1.05"/><rect x="29" y="24" width="1.05" height="1.05"/><rect x="31" y="24" width="1.05" height="1.05"/><rect x="32" y="24" width="1.05" height="1.05"/><rect x="8" y="25" width="1.05" height="1.05"/><rect x="10" y="25" width="1.05" height="1.05"/><rect x="12" y="25" width="1.05" height="1.05"/><rect x="13" y="25" width="1.05" height="1.05"/><rect x="14" y="25" width="1.05" height="1.05"/><rect x="15" y="25" width="1.05" height="1.05"/><rect x="18" y="25" width="1.05" height="1.05"/><rect x="19" y="25" width="1.05" height="1.05"/><rect x="21" y="25" width="1.05" height="1.05"/><rect x="22" y="25" width="1.05" height="1.05"/><rect x="26" y="25" width="1.05" height="1.05"/><rect x="27" y="25" width="1.05" height="1.05"/><rect x="31" y="25" width="1.05" height="1.05"/><rect x="32" y="25" width="1.05" height="1.05"/><rect x="0" y="26" width="1.05" height="1.05"/><rect x="1" y="26" width="1.05" height="1.05"/><rect x="2" y="26" width="1.05" height="1.05"/><rect x="3" y="26" width="1.05" height="1.05"/><rect x="4" y="26" width="1.05" height="1.05"/><rect x="5" y="26" width="1.05" height="1.05"/><rect x="6" y="26" width="1.05" height="1.05"/><rect x="8" y="26" width="1.05" height="1.05"/><rect x="11" y="26" width="1.05" height="1.05"/><rect x="14" y="26" width="1.05" height="1.05"/><rect x="15" y="26" width="1.05" height="1.05"/><rect x="16" y="26" width="1.05" height="1.05"/><rect x="17" y="26" width="1.05" height="1.05"/><rect x="18" y="26" width="1.05" height="1.05"/><rect x="21" y="26" width="1.05" height="1.05"/><rect x="22" y="26" width="1.05" height="1.05"/><rect x="23" y="26" width="1.05" height="1.05"/><rect x="25" y="26" width="1.05" height="1.05"/><rect x="26" y="26" width="1.05" height="1.05"/><rect x="27" y="26" width="1.05" height="1.05"/><rect x="29" y="26" width="1.05" height="1.05"/><rect x="30" y="26" width="1.05" height="1.05"/><rect x="31" y="26" width="1.05" height="1.05"/><rect x="32" y="26" width="1.05" height="1.05"/><rect x="0" y="27" width="1.05" height="1.05"/><rect x="6" y="27" width="1.05" height="1.05"/><rect x="9" y="27" width="1.05" height="1.05"/><rect x="11" y="27" width="1.05" height="1.05"/><rect x="12" y="27" width="1.05" height="1.05"/><rect x="15" y="27" width="1.05" height="1.05"/><rect x="16" y="27" width="1.05" height="1.05"/><rect x="18" y="27" width="1.05" height="1.05"/><rect x="19" y="27" width="1.05" height="1.05"/><rect x="21" y="27" width="1.05" height="1.05"/><rect x="23" y="27" width="1.05" height="1.05"/><rect x="25" y="27" width="1.05" height="1.05"/><rect x="26" y="27" width="1.05" height="1.05"/><rect x="27" y="27" width="1.05" height="1.05"/><rect x="28" y="27" width="1.05" height="1.05"/><rect x="31" y="27" width="1.05" height="1.05"/><rect x="0" y="28" width="1.05" height="1.05"/><rect x="2" y="28" width="1.05" height="1.05"/><rect x="3" y="28" width="1.05" height="1.05"/><rect x="4" y="28" width="1.05" height="1.05"/><rect x="6" y="28" width="1.05" height="1.05"/><rect x="10" y="28" width="1.05" height="1.05"/><rect x="11" y="28" width="1.05" height="1.05"/><rect x="14" y="28" width="1.05" height="1.05"/><rect x="15" y="28" width="1.05" height="1.05"/><rect x="17" y="28" width="1.05" height="1.05"/><rect x="21" y="28" width="1.05" height="1.05"/><rect x="23" y="28" width="1.05" height="1.05"/><rect x="24" y="28" width="1.05" height="1.05"/><rect x="27" y="28" width="1.05" height="1.05"/><rect x="28" y="28" width="1.05" height="1.05"/><rect x="29" y="28" width="1.05" height="1.05"/><rect x="30" y="28" width="1.05" height="1.05"/><rect x="31" y="28" width="1.05" height="1.05"/><rect x="32" y="28" width="1.05" height="1.05"/><rect x="0" y="29" width="1.05" height="1.05"/><rect x="2" y="29" width="1.05" height="1.05"/><rect x="3" y="29" width="1.05" height="1.05"/><rect x="4" y="29" width="1.05" height="1.05"/><rect x="6" y="29" width="1.05" height="1.05"/><rect x="8" y="29" width="1.05" height="1.05"/><rect x="10" y="29" width="1.05" height="1.05"/><rect x="12" y="29" width="1.05" height="1.05"/><rect x="13" y="29" width="1.05" height="1.05"/><rect x="15" y="29" width="1.05" height="1.05"/><rect x="17" y="29" width="1.05" height="1.05"/><rect x="18" y="29" width="1.05" height="1.05"/><rect x="19" y="29" width="1.05" height="1.05"/><rect x="21" y="29" width="1.05" height="1.05"/><rect x="22" y="29" width="1.05" height="1.05"/><rect x="25" y="29" width="1.05" height="1.05"/><rect x="26" y="29" width="1.05" height="1.05"/><rect x="27" y="29" width="1.05" height="1.05"/><rect x="28" y="29" width="1.05" height="1.05"/><rect x="29" y="29" width="1.05" height="1.05"/><rect x="30" y="29" width="1.05" height="1.05"/><rect x="31" y="29" width="1.05" height="1.05"/><rect x="32" y="29" width="1.05" height="1.05"/><rect x="0" y="30" width="1.05" height="1.05"/><rect x="2" y="30" width="1.05" height="1.05"/><rect x="3" y="30" width="1.05" height="1.05"/><rect x="4" y="30" width="1.05" height="1.05"/><rect x="6" y="30" width="1.05" height="1.05"/><rect x="8" y="30" width="1.05" height="1.05"/><rect x="9" y="30" width="1.05" height="1.05"/><rect x="11" y="30" width="1.05" height="1.05"/><rect x="16" y="30" width="1.05" height="1.05"/><rect x="18" y="30" width="1.05" height="1.05"/><rect x="21" y="30" width="1.05" height="1.05"/><rect x="24" y="30" width="1.05" height="1.05"/><rect x="25" y="30" width="1.05" height="1.05"/><rect x="27" y="30" width="1.05" height="1.05"/><rect x="29" y="30" width="1.05" height="1.05"/><rect x="31" y="30" width="1.05" height="1.05"/><rect x="32" y="30" width="1.05" height="1.05"/><rect x="0" y="31" width="1.05" height="1.05"/><rect x="6" y="31" width="1.05" height="1.05"/><rect x="11" y="31" width="1.05" height="1.05"/><rect x="13" y="31" width="1.05" height="1.05"/><rect x="14" y="31" width="1.05" height="1.05"/><rect x="16" y="31" width="1.05" height="1.05"/><rect x="18" y="31" width="1.05" height="1.05"/><rect x="21" y="31" width="1.05" height="1.05"/><rect x="24" y="31" width="1.05" height="1.05"/><rect x="26" y="31" width="1.05" height="1.05"/><rect x="29" y="31" width="1.05" height="1.05"/><rect x="31" y="31" width="1.05" height="1.05"/><rect x="32" y="31" width="1.05" height="1.05"/><rect x="0" y="32" width="1.05" height="1.05"/><rect x="1" y="32" width="1.05" height="1.05"/><rect x="2" y="32" width="1.05" height="1.05"/><rect x="3" y="32" width="1.05" height="1.05"/><rect x="4" y="32" width="1.05" height="1.05"/><rect x="5" y="32" width="1.05" height="1.05"/><rect x="6" y="32" width="1.05" height="1.05"/><rect x="8" y="32" width="1.05" height="1.05"/><rect x="9" y="32" width="1.05" height="1.05"/><rect x="10" y="32" width="1.05" height="1.05"/><rect x="11" y="32" width="1.05" height="1.05"/><rect x="13" y="32" width="1.05" height="1.05"/><rect x="14" y="32" width="1.05" height="1.05"/><rect x="16" y="32" width="1.05" height="1.05"/><rect x="17" y="32" width="1.05" height="1.05"/><rect x="19" y="32" width="1.05" height="1.05"/><rect x="20" y="32" width="1.05" height="1.05"/><rect x="21" y="32" width="1.05" height="1.05"/><rect x="22" y="32" width="1.05" height="1.05"/><rect x="23" y="32" width="1.05" height="1.05"/><rect x="24" y="32" width="1.05" height="1.05"/><rect x="27" y="32" width="1.05" height="1.05"/><rect x="29" y="32" width="1.05" height="1.05"/><rect x="30" y="32" width="1.05" height="1.05"/><rect x="32" y="32" width="1.05" height="1.05"/></g></svg>
<div class="a" style="left:224px;top:233.9px;width:170px;height:1px;background:#a4505a"></div>
<div class="a" style="left:224px;top:236.3px;width:170px;height:1px;background:#a4505a"></div>
<div class="a" style="left:90.5px;top:258.0px;width:438.0px;height:1px;background:#b5646b"></div>
<div class="a" style="left:90.5px;top:460.5px;width:438.0px;height:1px;background:#b5646b"></div>
<div class="a" style="left:90.0px;top:258.5px;width:1px;height:202.5px;background:#b5646b"></div>
<div class="a" style="left:527.5px;top:258.5px;width:1px;height:202.5px;background:#b5646b"></div>
<div class="a" style="left:90.5px;top:303.3px;width:437.5px;height:1px;background:#b5646b"></div>
<div class="a" style="left:90.5px;top:399.8px;width:437.5px;height:1px;background:#b5646b"></div>
<div class="a" style="left:90.5px;top:417.8px;width:437.5px;height:1px;background:#b5646b"></div>
<div class="a" style="left:104.1px;top:258.5px;width:1px;height:45.30000000000001px;background:#b5646b"></div>
<div class="a" style="left:340.7px;top:258.5px;width:1px;height:45.30000000000001px;background:#b5646b"></div>
<div class="a" style="left:350.5px;top:258.5px;width:1px;height:45.30000000000001px;background:#b5646b"></div>
<div class="a" style="left:207.2px;top:303.8px;width:1px;height:96.5px;background:#b5646b"></div>
<div class="a" style="left:241.3px;top:303.8px;width:1px;height:96.5px;background:#b5646b"></div>
<div class="a" style="left:266.9px;top:303.8px;width:1px;height:96.5px;background:#b5646b"></div>
<div class="a" style="left:318.0px;top:303.8px;width:1px;height:96.5px;background:#b5646b"></div>
<div class="a" style="left:373.1px;top:303.8px;width:1px;height:96.5px;background:#b5646b"></div>
<div class="a" style="left:440.8px;top:303.8px;width:1px;height:96.5px;background:#b5646b"></div>
<div class="a" style="left:459.1px;top:303.8px;width:1px;height:96.5px;background:#b5646b"></div>
<div class="a" style="left:207.2px;top:400.3px;width:1px;height:18.0px;background:#b5646b"></div>
<div class="a" style="left:106.6px;top:418.3px;width:1px;height:42.69999999999999px;background:#b5646b"></div>
<div class="a" style="left:339.5px;top:418.3px;width:1px;height:42.69999999999999px;background:#b5646b"></div>
<div class="a" style="left:350.7px;top:418.3px;width:1px;height:42.69999999999999px;background:#b5646b"></div>
<svg class="a" style="left:209.5px;top:404.8px" width="9" height="9" fill="none" stroke="#2e2e38" stroke-width="1.1"><circle cx="4.5" cy="4.5" r="3.8"/><path d="M2.5 2.5L6.5 6.5M6.5 2.5L2.5 6.5"/></svg>
<div class="t" style="left:96.4px;top:243.95px;font-size:7.5px;color:#b07236;-webkit-text-stroke:0.12px #b07236;;transform:scaleX(0.8975);transform-origin:0 50%">机器编号:</div>
<div class="t" style="left:130px;top:243.70px;font-size:8px;color:#2e2e38;;transform:scaleX(0.7117);transform-origin:0 50%">661619942171</div>
<div class="t" style="left:216.3px;top:212.95px;font-size:15.3px;color:#a5672b;-webkit-text-stroke:0.35px #a5672b;transform:scaleX(1.0182);transform-origin:0 50%">天津增值税电子普通发票</div>
<div class="t" style="left:407px;top:203.55px;font-size:7.5px;color:#b07236;-webkit-text-stroke:0.12px #b07236;;transform:scaleX(0.8858);transform-origin:0 50%">发票代码:</div>
<div class="t" style="left:437.8px;top:203.30px;font-size:8px;color:#2e2e38;;transform:scaleX(0.7254);transform-origin:0 50%">012001800311</div>
<div class="t" style="left:407px;top:217.45px;font-size:7.5px;color:#b07236;-webkit-text-stroke:0.12px #b07236;;transform:scaleX(0.8858);transform-origin:0 50%">发票号码:</div>
<div class="t" style="left:437.8px;top:217.20px;font-size:8px;color:#2e2e38;;transform:scaleX(0.7164);transform-origin:0 50%">33207675</div>
<div class="t" style="left:407px;top:230.55px;font-size:7.5px;color:#b07236;-webkit-text-stroke:0.12px #b07236;;transform:scaleX(0.8858);transform-origin:0 50%">开票日期:</div>
<div class="t" style="left:439.4px;top:230.30px;font-size:8px;color:#2e2e38;font-family:'Liberation Mono',monospace;-webkit-text-stroke:0.25px #2e2e38;transform:scaleX(0.8436);transform-origin:0 50%">2019</div>
<div class="t" style="left:464.4px;top:230.30px;font-size:8px;color:#2e2e38;font-family:'Liberation Mono',monospace;-webkit-text-stroke:0.25px #2e2e38;transform:scaleX(0.8741);transform-origin:0 50%">05</div>
<div class="t" style="left:480.9px;top:230.30px;font-size:8px;color:#2e2e38;font-family:'Liberation Mono',monospace;-webkit-text-stroke:0.25px #2e2e38;transform:scaleX(0.8429);transform-origin:0 50%">08</div>
<div class="t" style="left:407px;top:243.95px;font-size:7.5px;color:#b07236;-webkit-text-stroke:0.12px #b07236;;transform:scaleX(0.9978);transform-origin:0 50%">校 验 码:</div>
<div class="t" style="left:437.8px;top:243.70px;font-size:8px;color:#2e2e38;;transform:scaleX(0.7611);transform-origin:0 50%">76939 05688 34666 77916</div>
<div class="t" style="left:94.3px;top:266.25px;font-size:7.5px;color:#b07236;-webkit-text-stroke:0.12px #b07236;">购</div>
<div class="t" style="left:94.3px;top:278.25px;font-size:7.5px;color:#b07236;-webkit-text-stroke:0.12px #b07236;">买</div>
<div class="t" style="left:94.3px;top:290.45px;font-size:7.5px;color:#b07236;-webkit-text-stroke:0.12px #b07236;">方</div>
<div class="t" style="left:109.4px;top:261.15px;font-size:7.5px;color:#b07236;-webkit-text-stroke:0.12px #b07236;;transform:scaleX(0.8500);transform-origin:0 50%">名</div>
<div class="t" style="left:144px;top:261.15px;font-size:7.5px;color:#b07236;-webkit-text-stroke:0.12px #b07236;;transform:scaleX(0.9808);transform-origin:0 50%">称:</div>
<div class="t" style="left:155.4px;top:261.15px;font-size:7.5px;color:#2e2e38;;transform:scaleX(0.8562);transform-origin:0 50%">个人</div>
<div class="t" style="left:109.4px;top:272.25px;font-size:7.5px;color:#b07236;-webkit-text-stroke:0.12px #b07236;;transform:scaleX(0.8883);transform-origin:0 50%">纳税人识别号:</div>
<div class="t" style="left:109.4px;top:283.85px;font-size:7.5px;color:#b07236;-webkit-text-stroke:0.12px #b07236;;transform:scaleX(0.9618);transform-origin:0 50%">地 址、电 话:</div>
<div class="t" style="left:109.4px;top:295.95px;font-size:7.5px;color:#b07236;-webkit-text-stroke:0.12px #b07236;;transform:scaleX(0.8883);transform-origin:0 50%">开户行及账号:</div>
<div class="t" style="left:342.6px;top:263.35px;font-size:7.5px;color:#b07236;-webkit-text-stroke:0.12px #b07236;">密</div>
<div class="t" style="left:342.6px;top:278.65px;font-size:7.5px;color:#b07236;-webkit-text-stroke:0.12px #b07236;">码</div>
<div class="t" style="left:342.6px;top:293.45px;font-size:7.5px;color:#b07236;-webkit-text-stroke:0.12px #b07236;">区</div>
<div class="t" style="left:366px;top:260.85px;font-size:9.5px;color:#2a2a33;font-family:'Liberation Mono',monospace;-webkit-text-stroke:0.25px #2e2e38;transform:scaleX(0.9666);transform-origin:0 50%">*7//048893934-/649-&lt;580&gt;53+</div>
<div class="t" style="left:366px;top:271.95px;font-size:9.5px;color:#2a2a33;font-family:'Liberation Mono',monospace;-webkit-text-stroke:0.25px #2e2e38;transform:scaleX(0.9666);transform-origin:0 50%">227268&lt;07//400&lt;+3-&gt;&gt;&gt;&lt;0*8+6</div>
<div class="t" style="left:366px;top:283.15px;font-size:9.5px;color:#2a2a33;font-family:'Liberation Mono',monospace;-webkit-text-stroke:0.25px #2e2e38;transform:scaleX(0.9666);transform-origin:0 50%">-+--4&gt;0885&lt;+74-&lt;4316/8+6/*3</div>
<div class="t" style="left:366px;top:294.95px;font-size:9.5px;color:#2a2a33;font-family:'Liberation Mono',monospace;-webkit-text-stroke:0.25px #2e2e38;transform:scaleX(0.9666);transform-origin:0 50%">&gt;772+08268&lt;07//400&lt;+3-&gt;9604</div>
<div class="t" style="left:106px;top:308.40px;font-size:7px;color:#b07236;-webkit-text-stroke:0.12px #b07236;;transform:scaleX(0.9905);transform-origin:0 50%">货物或应税劳务、服务名称</div>
<div class="t" style="left:93.6px;top:318.50px;font-size:7px;color:#2e2e38;;transform:scaleX(0.9856);transform-origin:0 50%">(详见销货清单)</div>
<div class="t" style="left:211px;top:308.40px;font-size:7px;color:#b07236;-webkit-text-stroke:0.12px #b07236;;transform:scaleX(0.9786);transform-origin:0 50%">规格型号</div>
<div class="t" style="left:247.1px;top:308.40px;font-size:7px;color:#b07236;-webkit-text-stroke:0.12px #b07236;;transform:scaleX(0.9429);transform-origin:0 50%">单位</div>
<div class="t" style="left:284.4px;top:308.40px;font-size:7px;color:#b07236;-webkit-text-stroke:0.12px #b07236;;transform:scaleX(0.9286);transform-origin:0 50%">数</div>
<div class="t" style="left:294.5px;top:308.40px;font-size:7px;color:#b07236;-webkit-text-stroke:0.12px #b07236;;transform:scaleX(0.9286);transform-origin:0 50%">量</div>
<div class="t" style="left:337px;top:308.40px;font-size:7px;color:#b07236;-webkit-text-stroke:0.12px #b07236;;transform:scaleX(0.9286);transform-origin:0 50%">单</div>
<div class="t" style="left:347.5px;top:308.40px;font-size:7px;color:#b07236;-webkit-text-stroke:0.12px #b07236;;transform:scaleX(0.9286);transform-origin:0 50%">价</div>
<div class="t" style="left:398.3px;top:308.20px;font-size:7px;color:#b07236;-webkit-text-stroke:0.12px #b07236;;transform:scaleX(0.9286);transform-origin:0 50%">金</div>
<div class="t" style="left:412px;top:308.20px;font-size:7px;color:#b07236;-webkit-text-stroke:0.12px #b07236;;transform:scaleX(0.9286);transform-origin:0 50%">额</div>
<div class="t" style="left:444.4px;top:308.20px;font-size:7px;color:#b07236;-webkit-text-stroke:0.12px #b07236;;transform:scaleX(0.9714);transform-origin:0 50%">税率</div>
<div class="t" style="left:485.3px;top:308.20px;font-size:7px;color:#b07236;-webkit-text-stroke:0.12px #b07236;;transform:scaleX(0.9286);transform-origin:0 50%">税</div>
<div class="t" style="left:499.5px;top:308.20px;font-size:7px;color:#b07236;-webkit-text-stroke:0.12px #b07236;;transform:scaleX(0.9286);transform-origin:0 50%">额</div>
<div class="t" style="left:425.7px;top:318.20px;font-size:7px;color:#2e2e38;;transform:scaleX(0.8157);transform-origin:0 50%">46.62</div>
<div class="t" style="left:447px;top:318.20px;font-size:7px;color:#2e2e38;;transform:scaleX(0.8348);transform-origin:0 50%">13%</div>
<div class="t" style="left:514.7px;top:318.20px;font-size:7px;color:#2e2e38;;transform:scaleX(0.8294);transform-origin:0 50%">6.08</div>
<div class="t" style="left:120px;top:392.05px;font-size:7.5px;color:#b07236;-webkit-text-stroke:0.12px #b07236;;transform:scaleX(0.8125);transform-origin:0 50%">合</div>
<div class="t" style="left:151px;top:392.05px;font-size:7.5px;color:#b07236;-webkit-text-stroke:0.12px #b07236;;transform:scaleX(0.8125);transform-origin:0 50%">计</div>
<div class="t" style="left:410px;top:393.00px;font-size:9px;color:#2e2e38;font-family:'Liberation Mono',monospace;-webkit-text-stroke:0.25px #2e2e38;transform:scaleX(0.9257);transform-origin:0 50%">¥46.62</div>
<div class="t" style="left:501.5px;top:393.00px;font-size:9px;color:#2e2e38;font-family:'Liberation Mono',monospace;-webkit-text-stroke:0.25px #2e2e38;transform:scaleX(0.9069);transform-origin:0 50%">¥6.08</div>
<div class="t" style="left:119px;top:406.85px;font-size:7.5px;color:#b07236;-webkit-text-stroke:0.12px #b07236;;transform:scaleX(0.9057);transform-origin:0 50%">价税合计(大写)</div>
<div class="t" style="left:220px;top:406.55px;font-size:7.5px;color:#2e2e38;;transform:scaleX(0.8125);transform-origin:0 50%">伍拾贰圆柒角</div>
<div class="t" style="left:417.6px;top:406.80px;font-size:7px;color:#b8875a;;transform:scaleX(1.0390);transform-origin:0 50%">(小写)</div>
<div class="t" style="left:437px;top:405.80px;font-size:9px;color:#2e2e38;font-family:'Liberation Mono',monospace;-webkit-text-stroke:0.25px #2e2e38;transform:scaleX(0.9443);transform-origin:0 50%">¥52.70</div>
<div class="t" style="left:94.5px;top:427.15px;font-size:7.5px;color:#b07236;-webkit-text-stroke:0.12px #b07236;">销</div>
<div class="t" style="left:94.5px;top:437.15px;font-size:7.5px;color:#b07236;-webkit-text-stroke:0.12px #b07236;">售</div>
<div class="t" style="left:94.5px;top:448.85px;font-size:7.5px;color:#b07236;-webkit-text-stroke:0.12px #b07236;">方</div>
<div class="t" style="left:109.1px;top:421.55px;font-size:7.5px;color:#b07236;-webkit-text-stroke:0.12px #b07236;;transform:scaleX(0.8500);transform-origin:0 50%">名</div>
<div class="t" style="left:144.5px;top:421.55px;font-size:7.5px;color:#b07236;-webkit-text-stroke:0.12px #b07236;;transform:scaleX(0.8421);transform-origin:0 50%">称:</div>
<div class="t" style="left:155.2px;top:421.55px;font-size:7.5px;color:#2e2e38;;transform:scaleX(0.8693);transform-origin:0 50%">天津瑞佳讯贸易有限公司</div>
<div class="t" style="left:109.1px;top:432.15px;font-size:7.5px;color:#b07236;-webkit-text-stroke:0.12px #b07236;;transform:scaleX(0.8784);transform-origin:0 50%">纳税人识别号:</div>
<div class="t" style="left:155.2px;top:431.30px;font-size:9.2px;color:#30303a;font-family:'Liberation Mono',monospace;-webkit-text-stroke:0.1px #30303a;transform:scaleX(1.0055);transform-origin:0 50%">91120222079642398Y</div>
<div class="t" style="left:109.1px;top:443.25px;font-size:7.5px;color:#b07236;-webkit-text-stroke:0.12px #b07236;;transform:scaleX(0.9510);transform-origin:0 50%">地 址、电 话:</div>
<div class="t" style="left:155.2px;top:443.25px;font-size:7.5px;color:#2e2e38;;transform:scaleX(0.8467);transform-origin:0 50%">天津市武清区京津电子商务产业园宏达道北侧2号 57807000</div>
<div class="t" style="left:109.1px;top:453.45px;font-size:7.5px;color:#b07236;-webkit-text-stroke:0.12px #b07236;;transform:scaleX(0.8784);transform-origin:0 50%">开户行及账号:</div>
<div class="t" style="left:155.2px;top:453.95px;font-size:6.5px;color:#2e2e38;;transform:scaleX(0.8440);transform-origin:0 50%">中国建设银行股份有限公司天津武清区支行 12001720800052531259</div>
<div class="t" style="left:342.5px;top:422.25px;font-size:7.5px;color:#b07236;-webkit-text-stroke:0.12px #b07236;">备</div>
<div class="t" style="left:342.5px;top:449.75px;font-size:7.5px;color:#b07236;-webkit-text-stroke:0.12px #b07236;">注</div>
<div class="t" style="left:357.6px;top:421.00px;font-size:7px;color:#2e2e38;;transform:scaleX(0.8574);transform-origin:0 50%">订单号:94859303935</div>
<div class="t" style="left:98px;top:468.05px;font-size:7.5px;color:#b07236;-webkit-text-stroke:0.12px #b07236;;transform:scaleX(0.9581);transform-origin:0 50%">收款人:</div>
<div class="t" style="left:123.5px;top:468.05px;font-size:7.5px;color:#2e2e38;;transform:scaleX(0.8281);transform-origin:0 50%">京东商城</div>
<div class="t" style="left:221px;top:468.25px;font-size:7.5px;color:#b07236;-webkit-text-stroke:0.12px #b07236;;transform:scaleX(0.8290);transform-origin:0 50%">复核:</div>
<div class="t" style="left:314px;top:468.05px;font-size:7.5px;color:#b07236;-webkit-text-stroke:0.12px #b07236;;transform:scaleX(0.9581);transform-origin:0 50%">开票人:</div>
<div class="t" style="left:340.5px;top:468.05px;font-size:7.5px;color:#2e2e38;;transform:scaleX(0.8281);transform-origin:0 50%">京东商城</div>
<div class="t" style="left:408px;top:468.75px;font-size:7.5px;color:#b07236;-webkit-text-stroke:0.12px #b07236;;transform:scaleX(0.9464);transform-origin:0 50%">销售方:(章)</div>
<svg class="a" style="left:270px;top:205px" width="80" height="56"><ellipse cx="38" cy="28.2" rx="31.8" ry="20.6" fill="none" stroke="#e8141c" stroke-width="2.3"/><text x="37.5" y="31.6" font-size="6.2" fill="#df2c36" text-anchor="middle" font-family="Liberation Sans" font-weight="bold" letter-spacing="-0.1">国家税务总局</text><path id="arc1b" d="M22 41.5 Q38 45 54 41.5" fill="none"/><text font-size="5" fill="#df2c36" font-family="Liberation Sans" text-anchor="middle"><textPath href="#arc1b" startOffset="50%">天津市税务局</textPath></text><path id="arc1" d="M12 31 A26 17 0 0 1 64 31" fill="none"/><text font-size="5.6" fill="#e2404a" font-family="Liberation Sans" text-anchor="middle" letter-spacing="0.9"><textPath href="#arc1" startOffset="50%">全国统一发票监制章</textPath></text></svg>
<svg class="a" style="left:440px;top:423px" width="88" height="66"><ellipse cx="43.3" cy="33" rx="39.5" ry="29.3" fill="none" stroke="#e8141c" stroke-width="2.6"/><path id="arc2" d="M11.5 44 A33 24.5 0 1 1 75.1 44" fill="none"/><text font-size="7.4" fill="#df3038" font-family="Liberation Serif" text-anchor="middle" letter-spacing="1.6"><textPath href="#arc2" startOffset="50%">天津瑞佳讯贸易有限公司</textPath></text><text x="43.3" y="37.8" font-size="6.6" fill="#df3038" text-anchor="middle" font-family="Liberation Sans" letter-spacing="-0.55">91120222079642398Y</text><text x="43.3" y="51.8" font-size="7.6" fill="#df3038" text-anchor="middle" font-family="Liberation Serif" font-weight="bold" letter-spacing="0.3">发票专用章</text></svg>
<!-- /PHOTOS -->
</body></html>
